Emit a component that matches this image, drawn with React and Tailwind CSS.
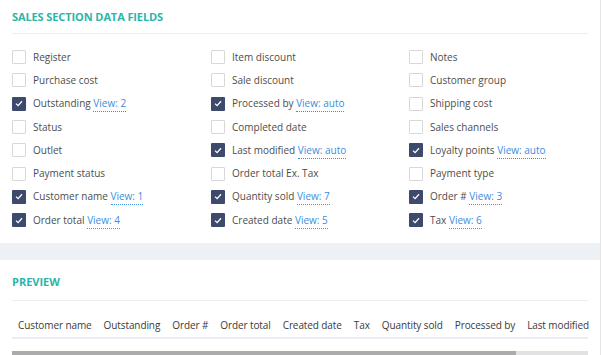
const fields = [
  [
    { label: "Register" },
    { label: "Purchase cost" },
    { label: "Outstanding", view: "2" },
    { label: "Status" },
    { label: "Outlet" },
    { label: "Payment status" },
    { label: "Customer name", view: "1" },
    { label: "Order total", view: "4" },
  ],
  [
    { label: "Item discount" },
    { label: "Sale discount" },
    { label: "Processed by", view: "auto" },
    { label: "Completed date" },
    { label: "Last modified", view: "auto" },
    { label: "Order total Ex. Tax" },
    { label: "Quantity sold", view: "7" },
    { label: "Created date", view: "5" },
  ],
  [
    { label: "Notes" },
    { label: "Customer group" },
    { label: "Shipping cost" },
    { label: "Sales channels" },
    { label: "Loyalty points", view: "auto" },
    { label: "Payment type" },
    { label: "Order #", view: "3" },
    { label: "Tax", view: "6" },
  ],
];

const columns = [
  "Customer name",
  "Outstanding",
  "Order #",
  "Order total",
  "Created date",
  "Tax",
  "Quantity sold",
  "Processed by",
  "Last modified",
];

const Checkbox = ({ checked }) =>
  checked ? (
    <span className="w-[14px] h-[14px] shrink-0 bg-[#3e4a6b] rounded-[1px] flex items-center justify-center">
      <svg width="8" height="7" viewBox="0 0 8 7" fill="none">
        <path d="M1 3.6 L3.1 5.6 L7 1.2" stroke="#fff" strokeWidth="1.3" />
      </svg>
    </span>
  ) : (
    <span className="w-[14px] h-[14px] shrink-0 border border-[#d8d8d8] bg-white rounded-[1px]" />
  );

const FieldRow = ({ label, view }) => (
  <div className="h-[23.3px] flex items-center gap-[7px]">
    <Checkbox checked={!!view} />
    <span className="text-[10px] text-[#4d4d4d] whitespace-nowrap">
      {label}
      {view && (
        <>
          {" "}
          <span className="text-[#3b8ee0] border-b border-dotted border-[#3b8ee0] pb-[1px]">
            View: {view}
          </span>
        </>
      )}
    </span>
  </div>
);

export default function App() {
  return (
    <div
      className="w-[602px] h-[355px] overflow-hidden bg-white flex flex-col"
      style={{ fontFamily: '"Open Sans", sans-serif' }}
    >
      <div className="w-[601px] border-r border-[#e4e4e4] bg-white h-[243px] shrink-0 px-3">
        <h2 className="h-[34px] flex items-center text-[11px] font-bold text-[#2bb5aa] tracking-[-0.1px] border-b border-[#eeeeee] pt-[1px]">
          SALES SECTION DATA FIELDS
        </h2>
        <div className="grid grid-cols-[199px_198px_1fr] pt-[11.5px]">
          {fields.map((col, i) => (
            <div key={i} className="flex flex-col">
              {col.map((f) => (
                <FieldRow key={f.label} {...f} />
              ))}
            </div>
          ))}
        </div>
      </div>
      <div className="h-[17px] shrink-0 bg-[#edf1f6] w-[601px] border-r border-[#e4e4e4]" />
      <div className="flex-1 w-[601px] border-r border-[#e4e4e4] px-3">
        <h2 className="h-[41px] flex items-center text-[11px] font-bold text-[#2bb5aa] border-b border-[#eeeeee] pt-[4px] w-[576px]">
          PREVIEW
        </h2>
        <div className="w-[576px] flex h-[38px] items-center border-b-2 border-[#e9eef5] pt-[12px]">
          {columns.map((c) => (
            <div
              key={c}
              className="px-[6px] text-[10px] font-medium tracking-[-0.1px] text-[#3a3a3a] whitespace-nowrap"
            >
              {c}
            </div>
          ))}
        </div>
        <div className="w-[576px] h-[4px] mt-[12px] bg-[#e2e2e2] flex">
          <div className="w-[504px] h-full bg-[#ababab]" />
        </div>
      </div>
    </div>
  );
}
